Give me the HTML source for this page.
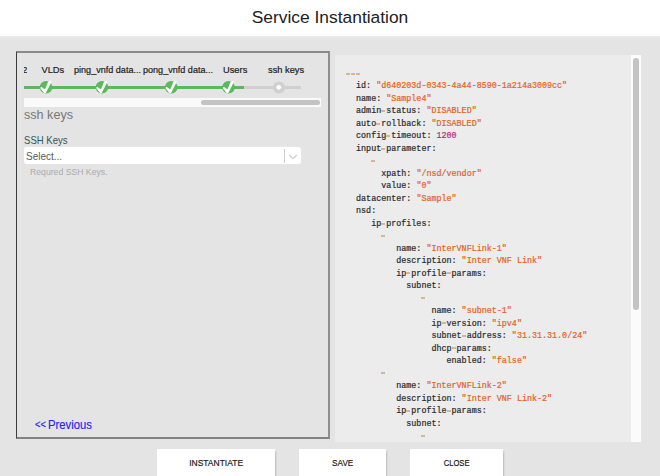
<!DOCTYPE html>
<html><head><meta charset="utf-8">
<style>
*{margin:0;padding:0;box-sizing:border-box}
html,body{width:660px;height:476px;overflow:hidden;background:#e4e4e4;font-family:"Liberation Sans",sans-serif}
.hdr{position:absolute;left:0;top:0;width:660px;height:36px;background:#fff}
.title{position:absolute;left:0;top:6.5px;width:660px;text-align:center;font-size:17.4px;color:#222;line-height:20px}
.panel{position:absolute;left:16px;top:51px;width:314px;height:388px;border-left:1px solid #3a3a3a;border-top:2px solid #8a8a8a;border-right:2px solid #8e8e8e;border-bottom:2px solid #828282}
.abs{position:absolute;white-space:nowrap}
.lbl{font-size:9.3px;color:#1c1c1c;line-height:10px;-webkit-text-stroke:0.2px #1c1c1c}
.code{position:absolute;left:335px;top:55px;width:306px;height:387px;background:#ececec;border-radius:2px 0 0 0;overflow:hidden}
.track{position:absolute;left:631px;top:55px;width:10px;height:387px;background:#fbfbfb}
.thumb{position:absolute;left:633.4px;top:57.5px;width:5.5px;height:252.5px;background:#c3c3c3;border-radius:3px}
pre{position:absolute;left:346px;top:68px;font-family:"Liberation Mono",monospace;font-size:8.38px;line-height:12.48px;color:#2a2a2a;-webkit-text-stroke:0.2px}
.s{color:#e4621c}.n{color:#b02a82}.h{display:inline-block;width:5.028px;height:2px;vertical-align:1.3px;background:linear-gradient(90deg,#d5b597 0,#d5b597 4.2px,transparent 4.2px)}
.btn{position:absolute;top:449px;height:30px;background:#fff;box-shadow:1.5px 1.5px 1.5px rgba(0,0,0,.14);font-size:9.8px;color:#1a1a1a;text-align:center;line-height:27.5px;-webkit-text-stroke:0.2px #1a1a1a}.btn span{display:inline-block;transform:scaleX(.865)}
</style></head><body>
<div class="abs" style="left:0;top:36px;width:660px;height:2px;background:linear-gradient(#eeeeee,#e5e5e5)"></div><div class="hdr"><div class="title">Service Instantiation</div></div>

<div class="panel"></div>
<!-- stepper labels -->
<div class="abs lbl" style="left:23.6px;top:65px;width:3.8px;overflow:hidden;direction:rtl">2</div>
<div class="abs lbl" style="left:41.5px;top:65px">VLDs</div>
<div class="abs lbl" style="left:73.6px;top:65px;transform:scaleX(.975);transform-origin:0 0">ping_vnfd data...</div>
<div class="abs lbl" style="left:143.2px;top:65px;transform:scaleX(.975);transform-origin:0 0">pong_vnfd data...</div>
<div class="abs lbl" style="left:223px;top:65px">Users</div>
<div class="abs lbl" style="left:268px;top:65px">ssh keys</div>
<!-- stepper line -->
<div class="abs" style="left:24px;top:86px;width:220px;height:3px;background:#5cb85c"></div>
<div class="abs" style="left:244px;top:86px;width:57px;height:3px;background:#cfcfcf"></div>
<svg class="abs" style="left:0;top:0" width="330" height="110"><g transform="translate(46.05,87.25)"><circle r="6.25" fill="#5cb85c"/><path d="M-5.6 0.3 L-4.7 -0.5 L-1.05 2.3 L2.1 -5.6 L4.6 -6.4 L5.6 -5.7 L-0.3 5.9 L-1.8 5.8 L-5.6 1.3 Z" fill="#fff"/></g><g transform="translate(101.95,87.25)"><circle r="6.25" fill="#5cb85c"/><path d="M-5.6 0.3 L-4.7 -0.5 L-1.05 2.3 L2.1 -5.6 L4.6 -6.4 L5.6 -5.7 L-0.3 5.9 L-1.8 5.8 L-5.6 1.3 Z" fill="#fff"/></g><g transform="translate(171.25,87.25)"><circle r="6.25" fill="#5cb85c"/><path d="M-5.6 0.3 L-4.7 -0.5 L-1.05 2.3 L2.1 -5.6 L4.6 -6.4 L5.6 -5.7 L-0.3 5.9 L-1.8 5.8 L-5.6 1.3 Z" fill="#fff"/></g><g transform="translate(228.5,87.25)"><circle r="6.25" fill="#5cb85c"/><path d="M-5.6 0.3 L-4.7 -0.5 L-1.05 2.3 L2.1 -5.6 L4.6 -6.4 L5.6 -5.7 L-0.3 5.9 L-1.8 5.8 L-5.6 1.3 Z" fill="#fff"/></g><circle cx="279" cy="87.5" r="6.1" fill="#d0d0d0"/><circle cx="278.8" cy="87.35" r="2.3" fill="#fff"/></svg>
<!-- h scrollbar -->
<div class="abs" style="left:24px;top:98px;width:297px;height:9px;background:#fafafa"></div>
<div class="abs" style="left:201px;top:100px;width:119px;height:5px;background:#c3c3c3;border-radius:3px"></div>

<div class="abs" style="left:23.8px;top:106.5px;font-size:12.8px;color:#777;line-height:15px;transform:scaleX(.985);transform-origin:0 0">ssh keys</div>
<div class="abs" style="left:23.5px;top:135px;font-size:10.4px;color:#345656;line-height:12px;transform:scaleX(.92);transform-origin:0 0">SSH Keys</div>
<div class="abs" style="left:24px;top:147.3px;width:277px;height:17px;background:#fff;border-radius:3px;box-shadow:0 0 0 0.5px #e8e8e8"></div>
<div class="abs" style="left:26px;top:151px;font-size:10.4px;color:#5a5a5a;line-height:12px;transform:scaleX(.96);transform-origin:0 0">Select...</div>
<div class="abs" style="left:284px;top:149px;width:1px;height:14px;background:#ccc"></div>
<svg class="abs" style="left:288px;top:153px" width="10" height="7"><path d="M1.2 2 L5 5.6 L8.8 2" stroke="#c8c8c8" stroke-width="1.1" fill="none"/></svg>
<div class="abs" style="left:29.6px;top:167px;font-size:8.8px;color:#aaa;line-height:10px;transform:scaleX(.985);transform-origin:0 0">Requred SSH Keys.</div>
<div class="abs" style="left:34.8px;top:417.2px;font-size:10.8px;color:#2424f2;line-height:14px;transform:scaleX(.86);transform-origin:0 0;-webkit-text-stroke:0.15px #2424f2">&lt;&lt;</div><div class="abs" style="left:47.8px;top:417.6px;font-size:11.9px;color:#2424f2;line-height:14px;transform:scaleX(.95);transform-origin:0 0;-webkit-text-stroke:0.15px #2424f2">Previous</div>

<div class="code"></div>
<div class="track"></div>
<div class="thumb"></div>
<pre><i class="h"></i><i class="h"></i><i class="h"></i>
  id: <span class="s">"d640203d-0343-4a44-8590-1a214a3009cc"</span>
  name: <span class="s">"Sample4"</span>
  admin<i class="h"></i>status: <span class="s">"DISABLED"</span>
  auto<i class="h"></i>rollback: <span class="s">"DISABLED"</span>
  config<i class="h"></i>timeout: <span class="n">1200</span>
  input<i class="h"></i>parameter:
     <i class="h"></i>
       xpath: <span class="s">"/nsd/vendor"</span>
       value: <span class="s">"0"</span>
  datacenter: <span class="s">"Sample"</span>
  nsd:
     ip<i class="h"></i>profiles:
       <i class="h"></i>
          name: <span class="s">"InterVNFLink-1"</span>
          description: <span class="s">"Inter VNF Link"</span>
          ip<i class="h"></i>profile<i class="h"></i>params:
            subnet:
               <i class="h"></i>
                 name: <span class="s">"subnet-1"</span>
                 ip<i class="h"></i>version: <span class="s">"ipv4"</span>
                 subnet<i class="h"></i>address: <span class="s">"31.31.31.0/24"</span>
                 dhcp<i class="h"></i>params:
                    enabled: <span class="s">"false"</span>
       <i class="h"></i>
          name: <span class="s">"InterVNFLink-2"</span>
          description: <span class="s">"Inter VNF Link-2"</span>
          ip<i class="h"></i>profile<i class="h"></i>params:
            subnet:
               <i class="h"></i>
</pre>

<div class="btn" style="left:156.5px;width:118.5px"><span>INSTANTIATE</span></div>
<div class="btn" style="left:298.7px;width:87.5px"><span style="transform:scaleX(.835)">SAVE</span></div>
<div class="btn" style="left:410px;width:92.5px"><span style="transform:scaleX(.78)">CLOSE</span></div>
</body></html>
